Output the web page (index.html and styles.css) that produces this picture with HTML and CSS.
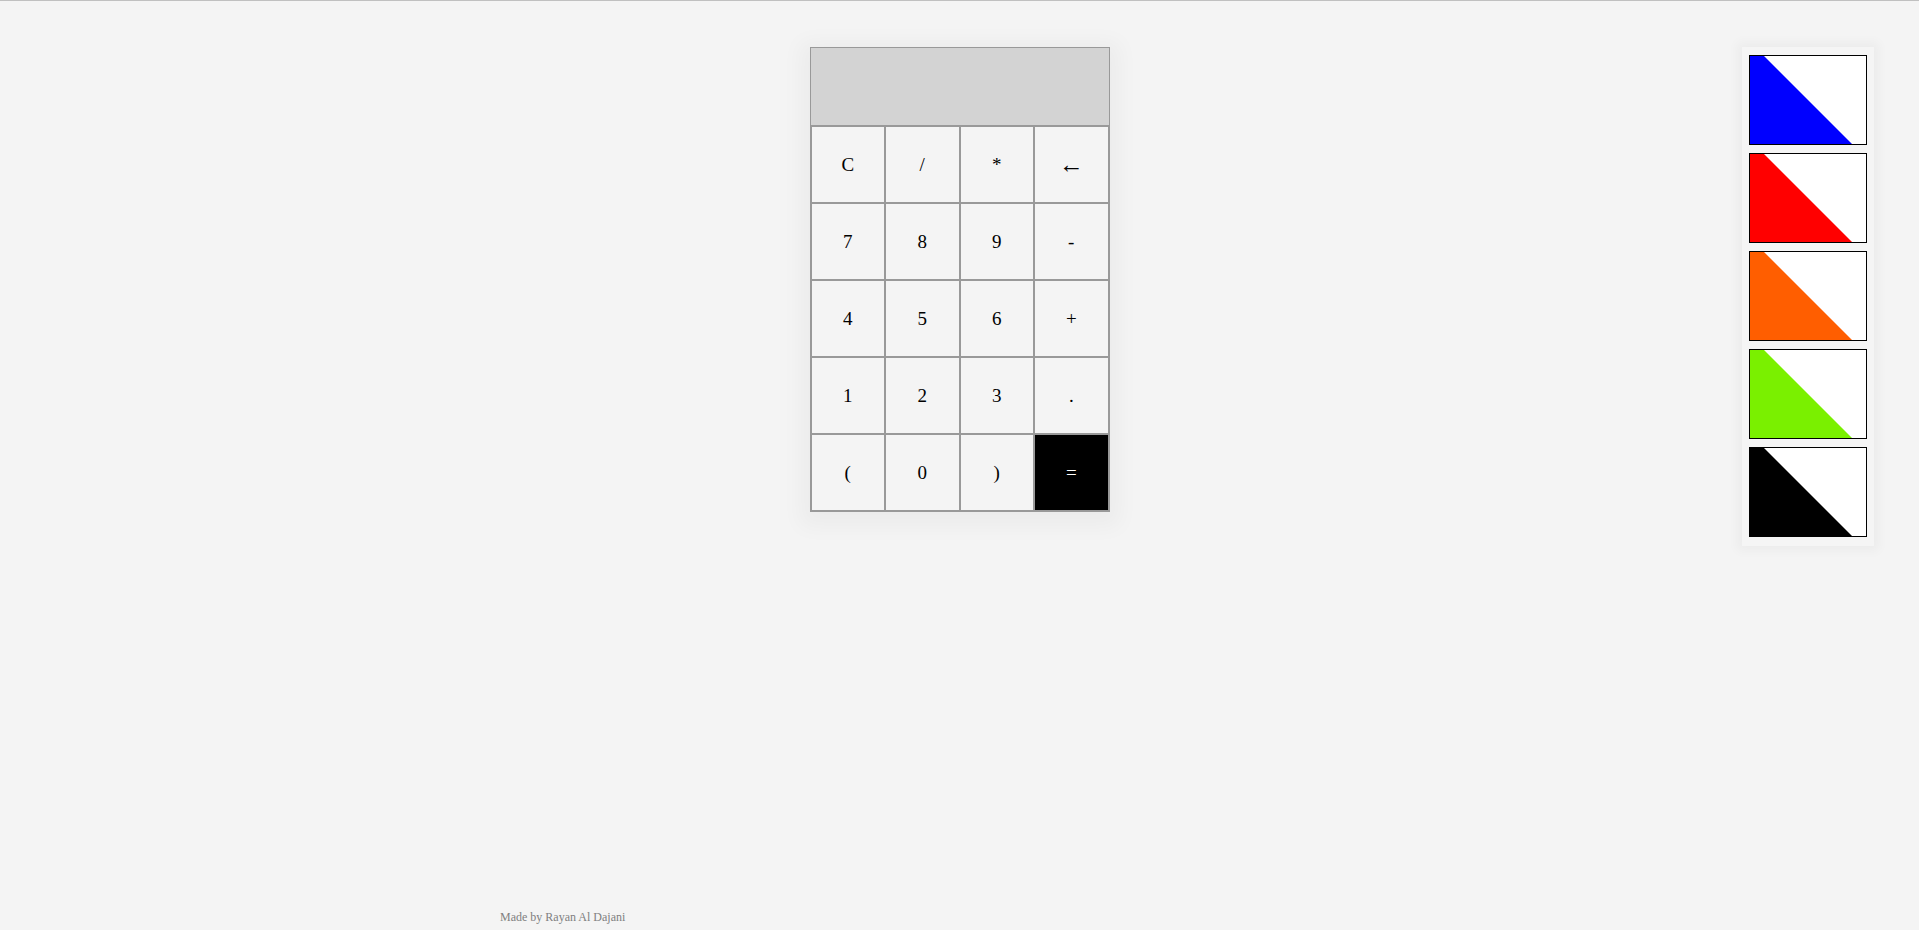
FILE: index.html
```html
<!DOCTYPE html>
<html>
<head>
<meta charset="utf-8">
<title>Calculator</title>
<link rel="stylesheet" href="styles.css">
</head>
<body>
<div class="page">
  <div class="spacer"></div>
  <div class="calc">
    <div class="display"></div>
    <div class="keys">
      <button class="key">C</button>
      <button class="key">/</button>
      <button class="key">*</button>
      <button class="key"><span class="arrow">←</span></button>
      <button class="key">7</button>
      <button class="key">8</button>
      <button class="key">9</button>
      <button class="key">-</button>
      <button class="key">4</button>
      <button class="key">5</button>
      <button class="key">6</button>
      <button class="key">+</button>
      <button class="key">1</button>
      <button class="key">2</button>
      <button class="key">3</button>
      <button class="key">.</button>
      <button class="key">(</button>
      <button class="key">0</button>
      <button class="key">)</button>
      <button class="key equals">=</button>
    </div>
  </div>
  <div class="themes">
    <div class="swatch blue"></div>
    <div class="swatch red"></div>
    <div class="swatch orange"></div>
    <div class="swatch green"></div>
    <div class="swatch black"></div>
  </div>
</div>
<footer class="footer">Made by Rayan Al Dajani</footer>
</body>
</html>
```

FILE: styles.css
```css
html, body {
  margin: 0;
  padding: 0;
}
body {
  background: #f4f4f4;
  border-top: 1px solid #c0c0c0;
  min-height: 929px;
  box-sizing: border-box;
  display: flex;
  flex-direction: column;
  font-family: "Liberation Serif", "Times New Roman", serif;
}
.page {
  display: grid;
  grid-template-columns: 1fr 300px 1fr;
  align-items: start;
  padding-top: 46px;
}
.calc {
  width: 300px;
  box-sizing: border-box;
  border: 1px solid #999;
  box-shadow: 0 5px 20px 10px rgba(0, 0, 0, 0.035);
  background: #f4f4f4;
}
.display {
  height: 77px;
  background: #d3d3d3;
  border-bottom: 1px solid #999;
}
.keys {
  display: grid;
  grid-template-columns: repeat(4, 1fr);
  grid-auto-rows: 77px;
}
.key {
  margin: 0;
  padding: 0;
  border: 1px solid #999;
  background: #f4f4f4;
  font-family: "Liberation Serif", "DejaVu Serif", serif;
  font-size: 19px;
  color: #000;
  display: flex;
  align-items: center;
  justify-content: center;
}
.arrow {
  font-size: 25px;
  line-height: 1;
}
.key.equals {
  background: #000;
  color: #fff;
}
.themes {
  justify-self: end;
  margin-right: 45px;
  width: 132px;
  box-sizing: border-box;
  padding: 8px 7px 9px;
  background: #f5f5f5;
  box-shadow: 0 0 10px 5px rgba(0, 0, 0, 0.035);
  display: flex;
  flex-direction: column;
  gap: 8px;
}
.swatch {
  height: 90px;
  box-sizing: border-box;
  border: 1px solid #000;
  background: #fff;
  position: relative;
}
.swatch::before {
  content: "";
  position: absolute;
  inset: 0;
  clip-path: polygon(0 0, 14px 0, 102px 100%, 0 100%);
  background: var(--swatch);
}
.blue { --swatch: #0000ff; }
.red { --swatch: #ff0000; }
.orange { --swatch: #ff5e00; }
.green { --swatch: #7af000; }
.black { --swatch: #000; }
.footer {
  margin-top: auto;
  padding: 0 0 4px 500px;
  font-size: 12px;
  line-height: 15px;
  color: #808080;
}
```
